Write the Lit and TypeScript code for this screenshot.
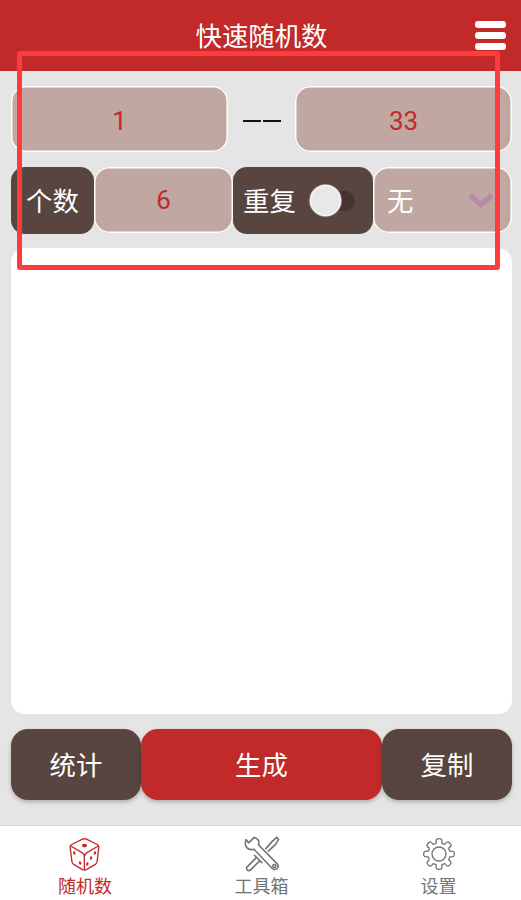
import { LitElement, html, css, svg } from "lit";
import { customElement } from "lit/decorators.js";

function gearPath(cx: number, cy: number, teeth: number, ro: number, ri: number): string {
  const pts: string[] = [];
  const step = (Math.PI * 2) / teeth;
  for (let i = 0; i < teeth; i++) {
    const a = i * step - Math.PI / 2;
    const p = (r: number, d: number) =>
      `${(cx + r * Math.cos(a + d * step)).toFixed(2)} ${(cy + r * Math.sin(a + d * step)).toFixed(2)}`;
    pts.push(`${i === 0 ? "M" : "Q"}${i === 0 ? "" : p(ri - 0.6, -0.5) + " "}${p(ri, -0.3)}`);
    pts.push(`Q${p(ro - 0.2, -0.3)} ${p(ro, -0.14)}`);
    pts.push(`Q${p(ro + 0.4, 0)} ${p(ro, 0.14)}`);
    pts.push(`Q${p(ro - 0.2, 0.3)} ${p(ri, 0.3)}`);
  }
  const a0 = -Math.PI / 2 - 0.3 * step;
  const last = -Math.PI / 2 - 0.5 * step;
  pts.push(`Q${(cx + (ri - 0.6) * Math.cos(last)).toFixed(2)} ${(cy + (ri - 0.6) * Math.sin(last)).toFixed(2)} ${(cx + ri * Math.cos(a0)).toFixed(2)} ${(cy + ri * Math.sin(a0)).toFixed(2)}Z`);
  return pts.join("");
}

const dice = html`<svg class="icon" width="32" height="34" viewBox="0 0 32 34" fill="none">
  <g transform="translate(-0.5 0)">
    <path d="M14 2.2 L3.2 7.5 Q1.4 8.4 1.7 10.6 L3.4 24.5 Q3.7 26.4 5.2 27.4 L13.6 32.4 Q16 33.6 18.4 32.4 L26.8 27.4 Q28.3 26.4 28.6 24.5 L30.3 10.6 Q30.6 8.4 28.8 7.5 L18 2.2 Q16 1.2 14 2.2Z" stroke="#c12a29" stroke-width="1.35" stroke-linejoin="round"/>
    <path d="M2.2 9 L13.6 15.6 Q15.6 16.8 15.8 19 L16 33 M29.8 9 L18.4 15.6 Q16.4 16.8 16.2 19" stroke="#c12a29" stroke-width="1.35"/>
    <g fill="#c12a29">
      <ellipse cx="16" cy="8.6" rx="2.6" ry="1.8"/>
      <ellipse cx="5.8" cy="16" rx="1.1" ry="1.8" transform="rotate(-20 5.8 16)"/>
      <ellipse cx="11.6" cy="26" rx="1.1" ry="1.8" transform="rotate(-20 11.6 26)"/>
      <ellipse cx="26.4" cy="16" rx="1.1" ry="1.8" transform="rotate(20 26.4 16)"/>
      <ellipse cx="22.6" cy="21" rx="1.1" ry="1.8" transform="rotate(20 22.6 21)"/>
      <ellipse cx="18.8" cy="27" rx="1.1" ry="1.8" transform="rotate(20 18.8 27)"/>
    </g>
  </g>
</svg>`;

const tools = html`<svg class="icon tools" width="36" height="36" viewBox="0 0 36 36" fill="none" stroke="#747474" stroke-width="1.6" stroke-linejoin="round" stroke-linecap="round">
  <path d="M10 1.6 L4.6 6.8 L2 3.6 Q0.4 8.6 2.8 11.6 Q5.6 14.6 10 13.2 L28 32.2 Q30.4 34.6 33 32.6 Q35.4 30 33 27.6 L14.6 9 Q15.6 5 13.4 3.2 Q11.8 1.6 10 1.6Z"/>
  <circle cx="30.3" cy="30" r="1.5"/>
  <path d="M21.8 12.6 L28.2 5.4 L32.6 1.4 L34.6 3.4 L31.6 8.4 L24.4 15.2 M12.6 21.4 L3.4 30.6 Q1.6 32.6 3.4 34 Q5 35.4 6.8 33.6 L16 24.6 M10.4 19.2 L17.8 26.6"/>
</svg>`;

const gear = html`<svg class="icon" width="34" height="34" viewBox="0 0 34 34" fill="none" stroke="#747474" stroke-width="1.3" stroke-linejoin="round">
  ${svg`<path d=${gearPath(17, 17, 8, 15.2, 11.4)}/>`}
  <circle cx="17" cy="17" r="7"/>
</svg>`;

@customElement("app-root")
export class AppRoot extends LitElement {
  static styles = css`
    :host {
      display: block;
      position: relative;
      width: 521px;
      height: 900px;
      background: #e5e5e5;
      font-family: Roboto, "Noto Sans CJK SC", sans-serif;
      overflow: hidden;
    }
    .page {
      display: flex;
      flex-direction: column;
      height: 900px;
    }
    .header {
      height: 71px;
      flex: none;
      box-sizing: border-box;
      background: #c12a29;
      color: #fff;
      display: flex;
      align-items: center;
      justify-content: center;
      font-size: 26.4px;
      position: relative;
      padding: 0 0 3px 2px;
    }
    .menu {
      position: absolute;
      left: 475px;
      top: 21px;
      width: 31px;
      display: flex;
      flex-direction: column;
      gap: 4.5px;
    }
    .menu i {
      display: block;
      height: 6.5px;
      border-radius: 3.25px;
      background: #fff;
    }
    .main {
      flex: 1;
      display: flex;
      flex-direction: column;
      padding: 15px 9px 0 11px;
    }
    .range {
      display: grid;
      grid-template-columns: 217px 67px 217px;
      height: 66px;
    }
    .range .field,
    .dash {
      padding-top: 3px;
    }
    .dash {
      display: flex;
      align-items: center;
      justify-content: center;
      gap: 2px;
      box-sizing: border-box;
    }
    .dash i {
      width: 18px;
      height: 2px;
      background: #111;
    }
    .field {
      box-sizing: border-box;
      background: #c0a7a1;
      box-shadow: inset 0 0 0 1.5px #fff;
      border-radius: 15px;
      display: flex;
      align-items: center;
      justify-content: center;
      color: #c12a29;
      font-size: 26px;
    }
    .opts {
      display: grid;
      grid-template-columns: 83px 139px 140px 139px;
      align-items: start;
      height: 67px;
      margin-top: 15px;
    }
    .opts .field {
      height: 66px;
    }
    .dark {
      box-sizing: border-box;
      height: 67px;
      padding-bottom: 2px;
      background: #59453f;
      color: #fff;
      border-radius: 14px;
      display: flex;
      align-items: center;
      justify-content: center;
      font-size: 26.4px;
    }
    .repeat {
      justify-content: flex-start;
      padding-left: 10px;
      gap: 14px;
    }
    .switch {
      position: relative;
      width: 45px;
      height: 20px;
      border-radius: 10px;
      background: #47332f;
      margin-top: 2px;
    }
    .switch b {
      position: absolute;
      left: 1px;
      top: -5px;
      width: 29px;
      height: 29px;
      border-radius: 50%;
      background: #e8e8e8;
      box-shadow: 0 0 1px 1.5px #fff;
    }
    .opts .select {
      justify-content: space-between;
      color: #fff;
      padding: 0 18px 2px 14px;
      font-size: 26.4px;
    }
    .chev {
      display: block;
      margin-top: 2px;
    }
    .panel {
      height: 466px;
      margin-top: 14px;
      background: #fff;
      border-radius: 14px;
    }
    .actions {
      display: grid;
      grid-template-columns: 130px 241px 130px;
      height: 71px;
      margin-top: 15px;
    }
    .btn {
      box-sizing: border-box;
      padding-bottom: 3px;
      color: #fff;
      border-radius: 17px;
      display: flex;
      align-items: center;
      justify-content: center;
      font-size: 26.4px;
      background: #59453f;
      box-shadow: 0 2px 4px rgba(0, 0, 0, 0.25);
    }
    .btn.primary {
      background: #c12a29;
    }
    .nav {
      flex: none;
      height: 75px;
      box-sizing: border-box;
      background: #fff;
      border-top: 1px solid #d6d6d6;
      display: grid;
      grid-template-columns: 170px 183px 171px;
    }
    .tab {
      display: flex;
      flex-direction: column;
      align-items: center;
      color: #747474;
      font-size: 18px;
      line-height: 22px;
      padding-top: 11px;
      position: relative;
    }
    .tab.active {
      color: #c12a29;
    }
    .icon {
      display: block;
      height: 34px;
      margin-bottom: 5px;
    }
    .icon.tools {
      height: 36px;
      margin-top: -1px;
      margin-bottom: 4px;
    }
    .mark {
      position: absolute;
      left: 17px;
      top: 51px;
      width: 483px;
      height: 219px;
      box-sizing: border-box;
      border: 5px solid #ff3b3b;
      border-radius: 3px;
      pointer-events: none;
    }
  `;

  render() {
    return html`
      <div class="page">
        <div class="header">
          快速随机数
          <div class="menu"><i></i><i></i><i></i></div>
        </div>
        <div class="main">
          <div class="range">
            <div class="field">1</div>
            <div class="dash"><i></i><i></i></div>
            <div class="field">33</div>
          </div>
          <div class="opts">
            <div class="dark">个数</div>
            <div class="field">6</div>
            <div class="dark repeat">重复<span class="switch"><b></b></span></div>
            <div class="field select">
              无
              <svg class="chev" width="26" height="16" viewBox="0 0 26 16"><path d="M2 3 L13 12.5 L24 3" fill="none" stroke="#b98aa8" stroke-width="5.5"/></svg>
            </div>
          </div>
          <div class="panel"></div>
          <div class="actions">
            <div class="btn">统计</div>
            <div class="btn primary">生成</div>
            <div class="btn">复制</div>
          </div>
        </div>
        <div class="nav">
          <div class="tab active">${dice}随机数</div>
          <div class="tab">${tools}工具箱</div>
          <div class="tab">${gear}设置</div>
        </div>
      </div>
      <div class="mark"></div>
    `;
  }
}
